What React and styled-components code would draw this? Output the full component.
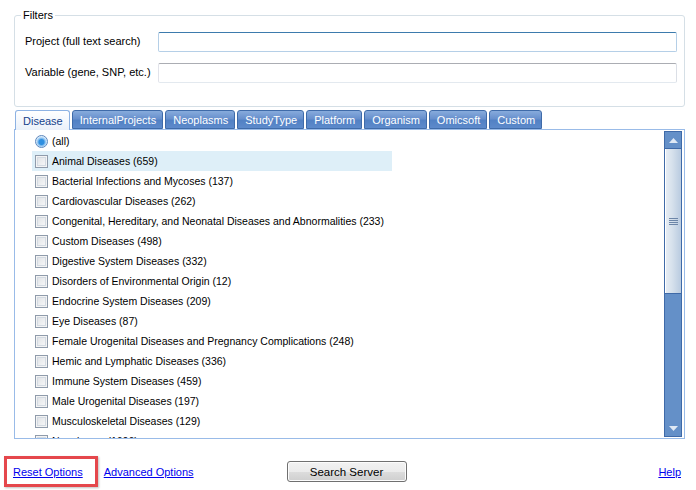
import React from "react";
import styled, { createGlobalStyle } from "styled-components";

const GlobalStyle = createGlobalStyle`
  html, body {
    margin: 0;
    padding: 0;
    background: #fff;
  }
  body {
    font-family: "Liberation Sans", Arial, sans-serif;
    font-size: 11px;
    color: #000;
  }
`;

const Page = styled.div`
  width: 696px;
  height: 490px;
  overflow: hidden;
  display: flex;
  flex-direction: column;
`;

const Content = styled.div`
  padding: 8px 11px 0 14px;
  display: flex;
  flex-direction: column;
`;

const Filters = styled.fieldset`
  margin: 0;
  padding: 0;
  border: 1px solid #d5dfe6;
  border-radius: 3px;
  min-width: 0;
`;

const Legend = styled.legend`
  margin-left: 6px;
  padding: 0 2px;
  font-size: 11px;
  line-height: 14px;
`;

const FilterGrid = styled.div`
  display: grid;
  grid-template-columns: 133px 1fr;
  row-gap: 11px;
  align-items: center;
  padding: 10px 7px 23px 10px;
`;

const Label = styled.label`
  font-size: 11px;
  margin-bottom: 3px;
`;

const TextInput = styled.input`
  box-sizing: border-box;
  height: 20px;
  width: 100%;
  margin: 0;
  padding: 0 3px;
  font: inherit;
  border: 1px solid #dbe3eb;
  border-top-color: ${(p) => (p.$focused ? "#3d7bad" : "#abadb3")};
  border-left-color: ${(p) => (p.$focused ? "#b5cfe7" : "#e2e3ea")};
  border-right-color: ${(p) => (p.$focused ? "#b5cfe7" : "#dbdfe6")};
  border-bottom-color: ${(p) => (p.$focused ? "#b5cfe7" : "#e3e9ef")};
  border-radius: 2px;
  outline: none;
  background: #fff;
`;

const TabStrip = styled.div`
  display: flex;
  gap: 2px;
  margin: 3px 0 0 1px;
  height: 19px;
  align-items: flex-end;
`;

const Tab = styled.div`
  box-sizing: border-box;
  padding: 0 6px 0 7px;
  display: flex;
  align-items: center;
  font-size: 11px;
  border: 1px solid ${(p) => (p.$active ? "#8db2e3" : "#3f6ba9")};
  border-bottom: ${(p) => (p.$active ? "none" : "1px solid #3f6ba9")};
  border-radius: 3px 3px 0 0;
  color: ${(p) => (p.$active ? "#15428b" : "#fff")};
  background: ${(p) =>
    p.$active
      ? "linear-gradient(#ffffff, #eaf1fa)"
      : "linear-gradient(#87abdc 0%, #6890cd 45%, #5281c4 55%, #5d8acb 100%)"};
  position: relative;
  z-index: ${(p) => (p.$active ? 1 : 0)};
  margin-bottom: ${(p) => (p.$active ? "-1px" : "0")};
  height: ${(p) => (p.$active ? "20px" : "19px")};
`;

const Panel = styled.div`
  box-sizing: border-box;
  height: 310px;
  border: 1px solid #99bbe8;
  display: flex;
  background: #fff;
`;

const List = styled.div`
  flex: 1;
  overflow: hidden;
  padding: 1px 0 0 17px;
  font-size: 10.5px;
`;

const Row = styled.div`
  box-sizing: border-box;
  height: 20px;
  width: ${(p) => (p.$hover ? "360px" : "auto")};
  padding-left: 3px;
  display: flex;
  align-items: center;
  gap: 4px;
  background: ${(p) => (p.$hover ? "#deeff8" : "transparent")};
  white-space: nowrap;
`;

const Check = styled.span`
  box-sizing: border-box;
  width: 13px;
  height: 13px;
  flex: none;
  border: 1px solid #8f9bab;
  box-shadow: inset 0 0 0 1px #f4f4f4, inset 0 0 0 2px #d3dae2;
  background: linear-gradient(135deg, #dcdfe3, #fbfbfb);
`;

const Radio = styled.span`
  box-sizing: border-box;
  width: 13px;
  height: 13px;
  flex: none;
  border-radius: 50%;
  border: 1px solid #5d87bd;
  background: radial-gradient(circle at 50% 55%, #2f8fe0 0 2.5px, #7ab8ee 3.5px, #c7e2f8 5px, #e8f2fb 6px);
`;

const Scrollbar = styled.div`
  width: 18px;
  margin: 1px 2px 1px 0;
  display: flex;
  flex-direction: column;
  border: 1px solid #3f6aa8;
  box-sizing: border-box;
  background: #6490c8;
`;

const ArrowButton = styled.div`
  height: 16px;
  flex: none;
  display: flex;
  align-items: center;
  justify-content: center;
  border-bottom: ${(p) => (p.$up ? "1px solid #3f6aa8" : "none")};
  background: #6490c8;
`;

const Thumb = styled.div`
  height: 145px;
  flex: none;
  box-sizing: border-box;
  border-bottom: 1px solid #3f6aa8;
  background: linear-gradient(90deg, #e8eef5 0%, #d6e1ec 45%, #b9cbe0 100%);
  box-shadow: inset 1px 0 0 #fff;
  display: flex;
  align-items: center;
  justify-content: center;
`;

const Track = styled.div`
  flex: 1;
`;

const Grip = () => (
  <svg width="9" height="7" viewBox="0 0 9 7">
    <g stroke="#6c86a8" strokeWidth="1">
      <line x1="0" y1="0.5" x2="9" y2="0.5" />
      <line x1="0" y1="2.5" x2="9" y2="2.5" />
      <line x1="0" y1="4.5" x2="9" y2="4.5" />
      <line x1="0" y1="6.5" x2="9" y2="6.5" />
    </g>
  </svg>
);

const Arrow = ({ up }) => (
  <svg width="9" height="5" viewBox="0 0 9 5">
    <polygon
      points={up ? "0,5 9,5 4.5,0" : "0,0 9,0 4.5,5"}
      fill="#dfe9f5"
    />
  </svg>
);

const Footer = styled.div`
  display: grid;
  grid-template-columns: 1fr auto 1fr;
  align-items: center;
  margin-top: 17px;
  padding: 0 7px 0 4px;
`;

const LeftLinks = styled.div`
  display: flex;
  align-items: center;
  gap: 6px;
`;

const Callout = styled.div`
  box-sizing: border-box;
  height: 31px;
  padding: 0 12px 0 6px;
  display: flex;
  align-items: center;
  border: 3px solid #e5474c;
  box-shadow: 1px 1px 2px rgba(0, 0, 0, 0.25);
`;

const Link = styled.a`
  font-family: "Liberation Sans", Arial, sans-serif;
  font-size: 11px;
  color: #0000ee;
  text-decoration: underline;
  cursor: pointer;
`;

const Button = styled.button`
  box-sizing: border-box;
  width: 120px;
  height: 21px;
  margin: 0;
  padding: 0;
  font-family: "Liberation Sans", Arial, sans-serif;
  font-size: 11.5px;
  color: #000;
  border: 1px solid #707070;
  border-radius: 3px;
  background: linear-gradient(#f2f2f2 0%, #ebebeb 50%, #dddddd 51%, #cfcfcf 100%);
  box-shadow: inset 0 0 0 1px #fcfcfc;
`;

const HelpLink = styled(Link)`
  justify-self: end;
  margin-right: 8px;
`;

const tabs = [
  "Disease",
  "InternalProjects",
  "Neoplasms",
  "StudyType",
  "Platform",
  "Organism",
  "Omicsoft",
  "Custom",
];

const diseases = [
  "Animal Diseases (659)",
  "Bacterial Infections and Mycoses (137)",
  "Cardiovascular Diseases (262)",
  "Congenital, Hereditary, and Neonatal Diseases and Abnormalities (233)",
  "Custom Diseases (498)",
  "Digestive System Diseases (332)",
  "Disorders of Environmental Origin (12)",
  "Endocrine System Diseases (209)",
  "Eye Diseases (87)",
  "Female Urogenital Diseases and Pregnancy Complications (248)",
  "Hemic and Lymphatic Diseases (336)",
  "Immune System Diseases (459)",
  "Male Urogenital Diseases (197)",
  "Musculoskeletal Diseases (129)",
  "Neoplasms (1606)",
];

export default function App() {
  return (
    <Page>
      <GlobalStyle />
      <Content>
        <Filters>
          <Legend>Filters</Legend>
          <FilterGrid>
            <Label>Project (full text search)</Label>
            <TextInput $focused />
            <Label>Variable (gene, SNP, etc.)</Label>
            <TextInput />
          </FilterGrid>
        </Filters>

        <TabStrip>
          {tabs.map((t, i) => (
            <Tab key={t} $active={i === 0}>
              {t}
            </Tab>
          ))}
        </TabStrip>

        <Panel>
          <List>
            <Row>
              <Radio />
              <span>(all)</span>
            </Row>
            {diseases.map((d, i) => (
              <Row key={d} $hover={i === 0}>
                <Check />
                <span>{d}</span>
              </Row>
            ))}
          </List>
          <Scrollbar>
            <ArrowButton $up>
              <Arrow up />
            </ArrowButton>
            <Thumb>
              <Grip />
            </Thumb>
            <Track />
            <ArrowButton>
              <Arrow />
            </ArrowButton>
          </Scrollbar>
        </Panel>
      </Content>

      <Footer>
        <LeftLinks>
          <Callout>
            <Link>Reset Options</Link>
          </Callout>
          <Link>Advanced Options</Link>
        </LeftLinks>
        <Button>Search Server</Button>
        <HelpLink>Help</HelpLink>
      </Footer>
    </Page>
  );
}
